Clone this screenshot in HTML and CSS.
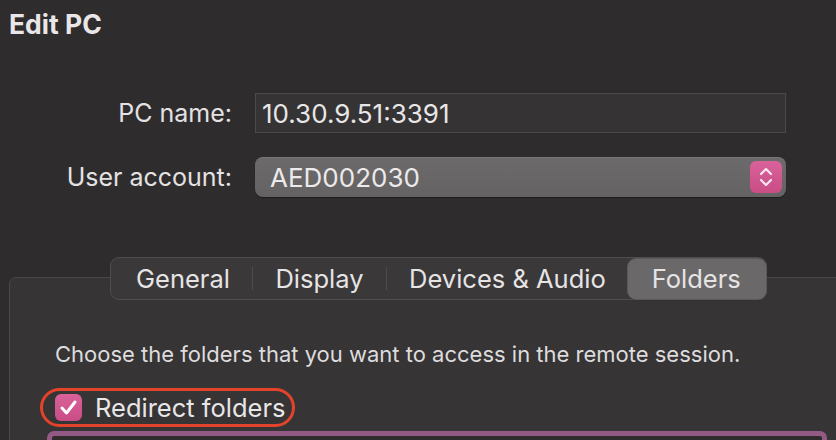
FILE: index.html
```html
<!DOCTYPE html>
<html>
<head>
<meta charset="utf-8">
<link rel="stylesheet" href="styles.css">
</head>
<body>
<div class="window">
  <h1 class="title">Edit PC</h1>
  <div class="form">
    <div class="row">
      <label class="label">PC name:</label>
      <div class="textfield">10.30.9.51:3391</div>
    </div>
    <div class="row row-popup">
      <label class="label">User account:</label>
      <div class="popup">
        <span class="popup-value">AED002030</span>
        <span class="stepper">
          <svg width="14" height="22" viewBox="0 0 14 22"><path d="M2 8 L7 3 L12 8 M2 14 L7 19 L12 14" fill="none" stroke="#fbe6f0" stroke-width="2.2" stroke-linecap="round" stroke-linejoin="round"/></svg>
        </span>
      </div>
    </div>
  </div>
  <div class="group">
    <div class="tabs">
      <div class="tab tab-first">General</div>
      <div class="sep"></div>
      <div class="tab">Display</div>
      <div class="sep"></div>
      <div class="tab">Devices &amp; Audio</div>
      <div class="tab tab-active">Folders</div>
    </div>
    <p class="desc">Choose the folders that you want to access in the remote session.</p>
    <div class="check-row">
      <div class="highlight">
        <span class="checkbox">
          <svg width="19" height="17" viewBox="0 0 19 17"><path d="M3 9 L7.5 14 L16 3" fill="none" stroke="#ffffff" stroke-width="3" stroke-linecap="round" stroke-linejoin="round"/></svg>
        </span>
        <span class="check-label">Redirect folders</span>
      </div>
    </div>
    <div class="folder-list"></div>
  </div>
</div>
</body>
</html>
```

FILE: styles.css
```css
html, body {
  margin: 0;
  padding: 0;
  background: #2e2c2d;
  overflow: hidden;
}
.window {
  width: 836px;
  height: 440px;
  overflow: hidden;
  font-family: Inter, "Liberation Sans", sans-serif;
  color: #e6e4e5;
}
.title {
  margin: 0;
  padding: 9px 0 0 9px;
  font-size: 26.5px;
  font-weight: 700;
  line-height: 30px;
  color: #e8e6e7;
}
.form {
  display: flex;
  flex-direction: column;
  gap: 24px;
  padding-top: 54px;
}
.row {
  display: grid;
  grid-template-columns: 232px 531px;
  column-gap: 23px;
  align-items: center;
}
.label {
  text-align: right;
  font-size: 25px;
  color: #e4e2e3;
}
.textfield {
  height: 38px;
  border: 1px solid #4b494a;
  background: #353334;
  font-size: 26px;
  line-height: 39px;
  padding-left: 6px;
  color: #e8e6e7;
}
.popup {
  height: 40px;
  border-radius: 8px;
  background: linear-gradient(#6c6a6b, #646263);
  box-shadow: 0 1px 1px rgba(0,0,0,0.35), inset 0 1px 0 rgba(255,255,255,0.08);
  display: flex;
  align-items: center;
  justify-content: space-between;
  padding: 0 4px 0 15px;
}
.popup-value {
  font-size: 26px;
  color: #eceaeb;
}
.stepper {
  width: 32px;
  height: 32px;
  border-radius: 6px;
  background: linear-gradient(#d9629b, #c94c85);
  display: flex;
  align-items: center;
  justify-content: center;
}
.group {
  margin: 80px 0 0 9px;
  width: 860px;
  height: 300px;
  border: 1px solid #4a4849;
  border-radius: 7px;
  background: #363435;
}
.tabs {
  display: flex;
  width: fit-content;
  align-items: center;
  margin: -21px 0 0 100px;
  height: 41px;
  border: 1px solid #4f4d4e;
  border-radius: 9px;
  background: #3a3839;
  padding: 0 0 0 1px;
}
.tab {
  font-size: 25.5px;
  padding: 0 22px;
  line-height: 40px;
  color: #e6e4e5;
}
.tab-first {
  padding-left: 24px;
}
.tab-active {
  background: #6a6869;
  border-radius: 8px;
  box-shadow: 0 0 0 1px #5a5859, 0 1px 1px rgba(0,0,0,0.3);
  padding: 0 25px 0 24px;
}
.sep {
  width: 1.5px;
  height: 23px;
  background: #4d4b4c;
}
.desc {
  margin: 41px 0 0 45px;
  font-size: 22px;
  color: #dedcdd;
  line-height: 26px;
}
.check-row {
  margin: 21px 0 0 30px;
}
.highlight {
  display: inline-flex;
  align-items: center;
  gap: 13px;
  height: 33px;
  padding: 0 6px 0 12px;
  border: 3px solid #e3432b;
  border-radius: 20px;
}
.checkbox {
  width: 27px;
  height: 27px;
  border-radius: 6px;
  background: linear-gradient(#d9629b, #c94c85);
  display: flex;
  align-items: center;
  justify-content: center;
}
.check-label {
  font-size: 25.5px;
  color: #e8e6e7;
}
.folder-list {
  margin: 4px 0 0 37px;
  width: 770px;
  height: 100px;
  border: 5px solid #925a85;
  border-radius: 7px;
  background: #2e2c2d;
}
```
